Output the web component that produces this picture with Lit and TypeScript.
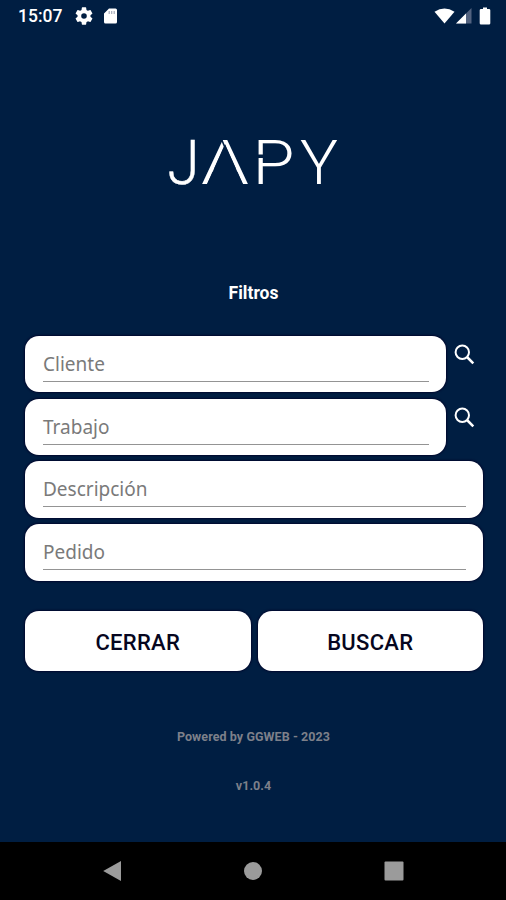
import { LitElement, html, css, nothing } from "lit";
import { customElement, property } from "lit/decorators.js";

@customElement("status-bar")
class StatusBar extends LitElement {
  static styles = css`
    :host { display: flex; height: 32px; align-items: center; padding: 0 15px 0 18px; box-sizing: border-box; color: #fff; font: 500 17.5px/32px Roboto, sans-serif; }
    .time { width: 45px; white-space: nowrap; }
    .left { margin-left: 12px; display: flex; gap: 10px; align-items: center; }
    .right { margin-left: auto; display: flex; align-items: center; }
    svg { display: block; }
    .signal { margin-left: 1px; }
    .battery { margin-left: 7.5px; }
  `;
  render() {
    return html`
      <span class="time">15:07</span>
      <div class="left">
        <svg width="18" height="18" viewBox="2 2 20 20"><path fill="#fff" d="M19.14 12.94c.04-.3.06-.61.06-.94 0-.32-.02-.64-.07-.94l2.03-1.58a.49.49 0 0 0 .12-.61l-1.92-3.32a.49.49 0 0 0-.59-.22l-2.39.96c-.5-.38-1.03-.7-1.62-.94l-.36-2.54a.48.48 0 0 0-.48-.41h-3.84a.48.48 0 0 0-.47.41l-.36 2.54c-.59.24-1.13.57-1.62.94l-2.39-.96a.48.48 0 0 0-.59.22L2.74 8.87a.48.48 0 0 0 .12.61l2.03 1.58c-.05.3-.09.63-.09.94s.02.64.07.94l-2.03 1.58a.49.49 0 0 0-.12.61l1.92 3.32c.12.22.37.29.59.22l2.39-.96c.5.38 1.03.7 1.62.94l.36 2.54c.05.24.24.41.48.41h3.84c.24 0 .44-.17.47-.41l.36-2.54c.59-.24 1.13-.56 1.62-.94l2.39.96c.22.08.47 0 .59-.22l1.92-3.32a.48.48 0 0 0-.12-.61zM12 15.1a3.1 3.1 0 1 1 0-6.2 3.1 3.1 0 0 1 0 6.2z"/></svg>
        <svg width="15" height="16" viewBox="0 0 15 16"><path fill="#fff" d="M6 .5h6.5a1.5 1.5 0 0 1 1.5 1.5v12a1.5 1.5 0 0 1-1.5 1.5h-10A1.5 1.5 0 0 1 1 14V5.5z"/><path stroke="#a5abba" stroke-width="1.2" d="M6.200 3v3M8.700 3v3M11.200 3v3"/></svg>
      </div>
      <div class="right">
        <svg width="21" height="16" viewBox="0 0 21 16"><path fill="#fff" d="M.5 3.800Q10.500-2.800 20.500 3.800L10.500 15.500z"/></svg>
        <svg class="signal" width="16" height="16" viewBox="0 0 16 16"><path fill="#52627f" d="M15.500 0v15.500H0z"/><path fill="#fff" d="M10 5.500v10H0z"/></svg>
        <svg class="battery" width="12" height="18" viewBox="0 0 12 18"><path fill="#fff" d="M4 .5h4V2h2a1.300 1.300 0 0 1 1.300 1.300v12.900a1.300 1.300 0 0 1-1.300 1.300H2A1.300 1.300 0 0 1 .7 16.200V3.300A1.300 1.300 0 0 1 2 2h2z"/></svg>
      </div>`;
  }
}

@customElement("japy-logo")
class JapyLogo extends LitElement {
  static styles = css`
    :host { display: block; width: 180px; height: 84px; }
    svg { display: block; }
    .word { font-family: Roboto, sans-serif; font-weight: 300; font-size: 62px; fill: #fff; }
    .narrow { stroke: #fff; stroke-width: 0.5; }
    .cut { fill: #001e42; }
    .slit { stroke: #001e42; stroke-width: 1.6; }
  `;
  render() {
    // The wordmark is stencilled: no crossbar in the A, short breaks in A and P.
    return html`<svg width="180" height="84" viewBox="0 -14 180 84">
      <g class="word">
        <text class="narrow" x="3.500" y="50" textLength="32" lengthAdjust="spacingAndGlyphs">J</text>
        <text x="37" y="50" textLength="48" lengthAdjust="spacingAndGlyphs">A</text>
        <text x="88.500" y="50" textLength="42" lengthAdjust="spacingAndGlyphs">P</text>
        <text x="136" y="50" textLength="38" lengthAdjust="spacingAndGlyphs">Y</text>
      </g>
      <polygon class="cut" points="61,10 79.200,51 42.800,51"/>
      <line class="slit" x1="57" y1="4" x2="62" y2="16"/>
      <rect class="cut" x="90" y="20.500" width="10" height="3.500"/>
    </svg>`;
  }
}

@customElement("filter-field")
class FilterField extends LitElement {
  @property() label = "";
  @property({ type: Boolean }) lookup = false;
  static styles = css`
    :host { display: flex; height: 56.5px; }
    .box { flex: 1; box-sizing: border-box; border-radius: 14px; background: #fff; padding: 10px 17.5px 0 18px; box-shadow: 0 0 2px 1px #00082d; }
    .line { height: 35px; border-bottom: 1px solid #949494; color: #7a7a7a; font: 400 19px/36px "Noto Sans", sans-serif; }
    .search { width: 37px; padding: 8.4px 0 0 8px; box-sizing: border-box; }
    svg { display: block; }
  `;
  render() {
    return html`
      <div class="box"><div class="line">${this.label}</div></div>
      ${this.lookup
        ? html`<div class="search"><svg width="21" height="21" viewBox="0 0 21 21" fill="none" stroke="#fff"><circle cx="8.300" cy="8.300" r="6.700" stroke-width="2"/><path d="M13 13l6.300 6.300" stroke-width="2.500"/></svg></div>`
        : nothing}`;
  }
}

@customElement("app-root")
class AppRoot extends LitElement {
  static styles = css`
    :host { display: flex; flex-direction: column; height: 900px; background: #001e42; color: #fff; font-family: Roboto, sans-serif; overflow: hidden; }
    main { flex: 1; display: flex; flex-direction: column; padding: 88px 23px 0 25px; }
    japy-logo { align-self: center; margin-left: -1px; }
    h1 { margin: 77px 0 0; font-size: 17.5px; line-height: 24px; font-weight: 700; text-align: center; letter-spacing: 0; margin-left: -1px; }
    .fields { display: flex; flex-direction: column; gap: 6.3px; margin-top: 30.8px; }
    .actions { display: grid; grid-template-columns: 1fr 1fr; gap: 7px; margin-top: 30.5px; }
    button { height: 60px; border: 0; border-radius: 14px; background: #fff; color: #060620; font: 500 22px Roboto, sans-serif; letter-spacing: 0.3px; box-shadow: 0 0 2px 1px #00082d; padding: 2px 0 0; }
    .foot { color: #7d808a; font-size: 12.5px; line-height: 16px; font-weight: 700; text-align: center; letter-spacing: 0.07px; margin-left: -1px; }
    .credit { margin-top: 57.5px; }
    .version { margin-top: 33px; }
    nav { height: 58.5px; background: #000; display: flex; justify-content: space-between; align-items: center; padding: 0 102.5px 0 102px; }
    nav svg { display: block; }
  `;
  render() {
    const fields = [
      { label: "Cliente", lookup: true },
      { label: "Trabajo", lookup: true },
      { label: "Descripción", lookup: false },
      { label: "Pedido", lookup: false },
    ];
    return html`
      <status-bar></status-bar>
      <main>
        <japy-logo></japy-logo>
        <h1>Filtros</h1>
        <div class="fields">
          ${fields.map((f) => html`<filter-field .label=${f.label} ?lookup=${f.lookup}></filter-field>`)}
        </div>
        <div class="actions"><button>CERRAR</button><button>BUSCAR</button></div>
        <div class="foot credit">Powered by GGWEB - 2023</div>
        <div class="foot version">v1.0.4</div>
      </main>
      <nav>
        <svg width="20" height="22" viewBox="0 0 20 22"><path fill="#9b9b9b" d="M1.200 11L19 1v20z"/></svg>
        <svg width="20" height="20" viewBox="0 0 20 20"><circle cx="10" cy="10" r="9" fill="#9b9b9b"/></svg>
        <svg width="20" height="20" viewBox="0 0 20 20"><rect x=".5" y=".5" width="19" height="19" rx="1" fill="#9b9b9b"/></svg>
      </nav>`;
  }
}
